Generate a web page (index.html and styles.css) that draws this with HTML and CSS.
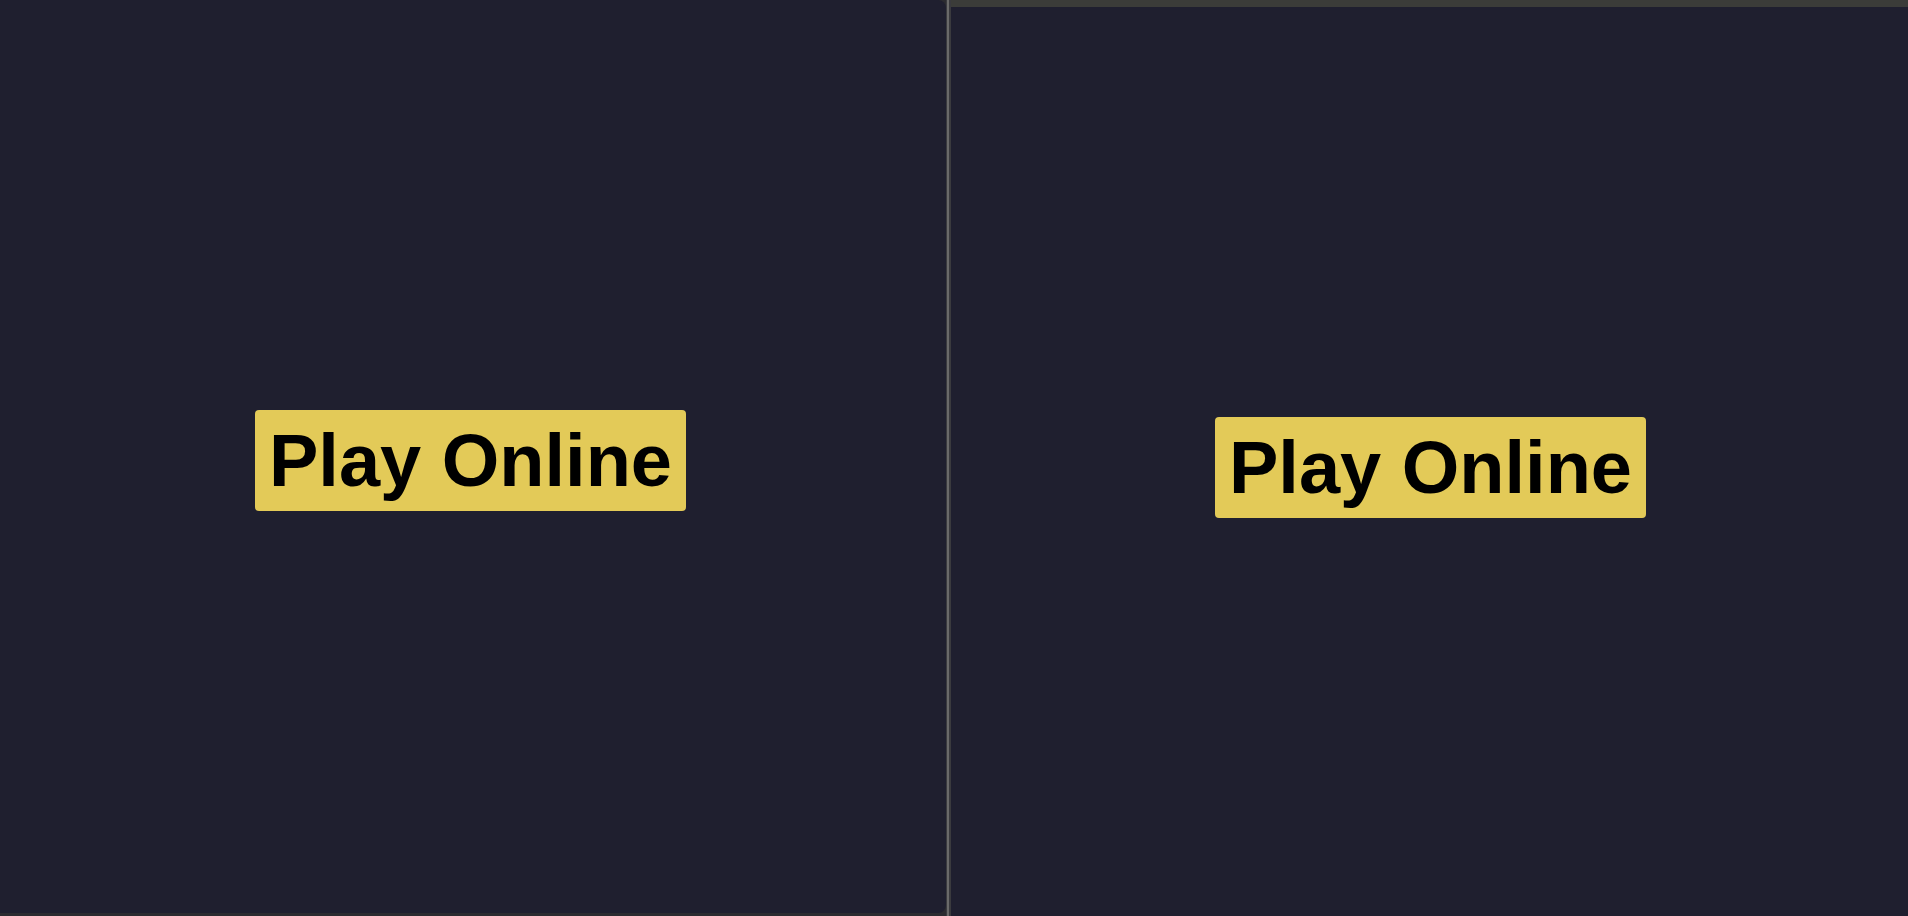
FILE: index.html
```html
<!DOCTYPE html>
<html>
<head>
<meta charset="utf-8">
<link rel="stylesheet" href="styles.css">
</head>
<body>
<div class="app">
  <div class="pane pane-left">
    <button class="play">Play Online</button>
  </div>
  <div class="divider"></div>
  <div class="right-col">
    <div class="topbar"></div>
    <div class="pane pane-right">
      <button class="play">Play Online</button>
    </div>
  </div>
</div>
</body>
</html>
```
FILE: styles.css
```css
html, body {
  margin: 0;
  padding: 0;
  height: 100%;
  background: #2b2b30;
  overflow: hidden;
}
.app {
  display: flex;
  width: 1908px;
  height: 916px;
}
.pane {
  background: #1f1f2f;
  display: flex;
  align-items: center;
  justify-content: center;
}
.pane-left {
  width: 946px;
  height: 913px;
  border-radius: 0 8px 8px 0;
  padding-top: 8px;
  padding-right: 5px;
  box-sizing: border-box;
}
.divider {
  width: 5px;
  background: linear-gradient(to right, #3a3a3e 0, #3a3a3e 1px, #6a6a6a 1px, #6a6a6a 3px, #3a3a3e 3px);
}
.right-col {
  flex: 1;
  display: flex;
  flex-direction: column;
}
.topbar {
  height: 7px;
  background: #3b3c39;
}
.pane-right {
  flex: 1;
  padding-top: 12px;
  padding-left: 2px;
  box-sizing: border-box;
}
.play {
  font-family: "Liberation Sans", Arial, sans-serif;
  font-weight: bold;
  font-size: 74px;
  line-height: 87px;
  color: #000;
  background: #e3ca58;
  border: none;
  border-radius: 4px;
  padding: 7px 14px;
  cursor: pointer;
}
```
